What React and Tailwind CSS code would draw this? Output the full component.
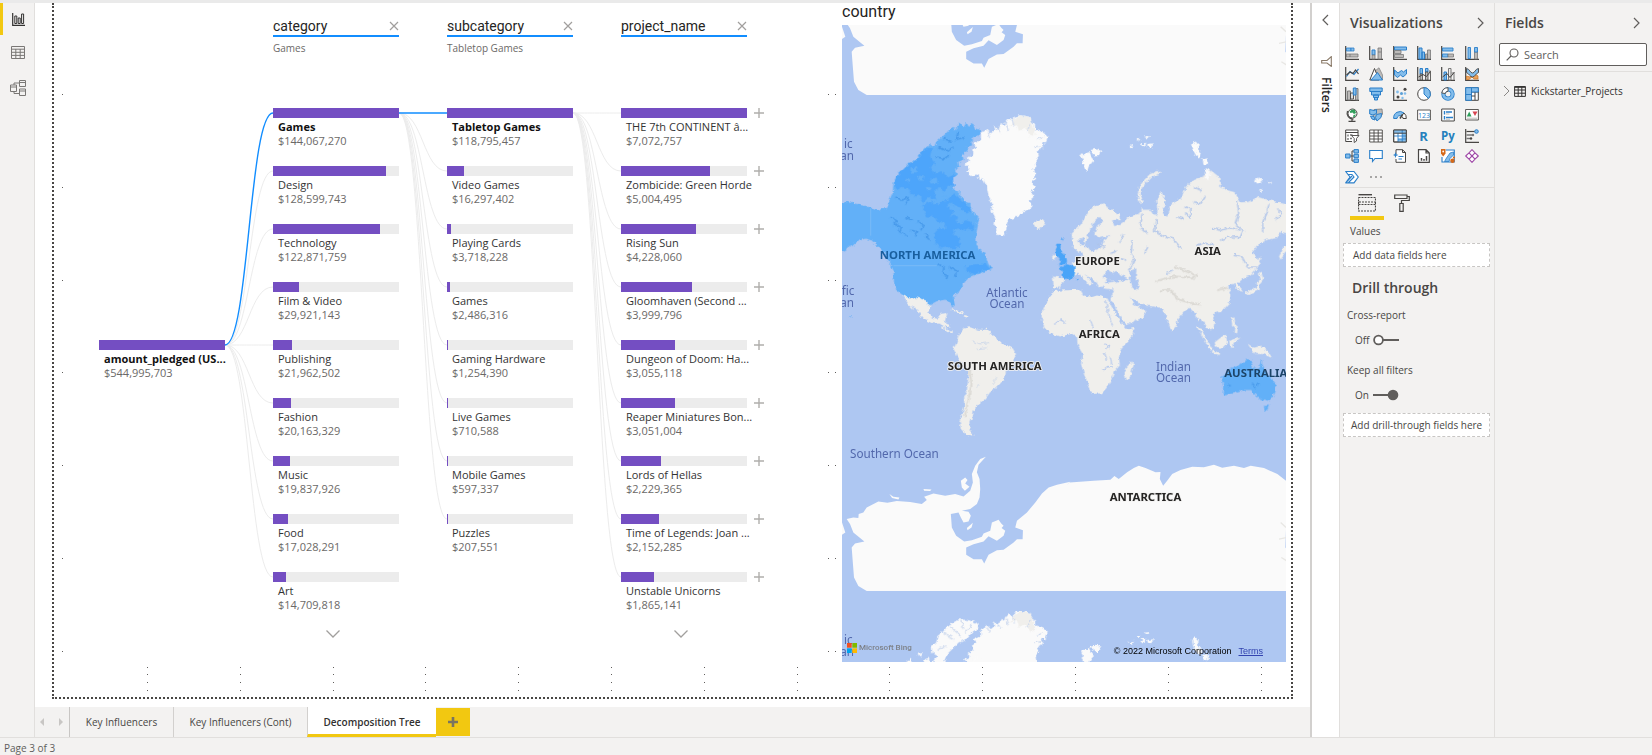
import React from "react";

const D = "#484644";
const B = "#2b7fc9";
const L = "#83bdeb";
const G = "#bdbbb9";

/* ---------- decomposition tree ---------- */

const ROW = 58;

const columns = [
  {
    field: "category",
    picked: "Games",
    more: true,
    nodes: [
      ["Games", "$144,067,270", 100],
      ["Design", "$128,599,743", 89.3],
      ["Technology", "$122,871,759", 85.3],
      ["Film & Video", "$29,921,143", 20.8],
      ["Publishing", "$21,962,502", 15.2],
      ["Fashion", "$20,163,329", 14],
      ["Music", "$19,837,926", 13.8],
      ["Food", "$17,028,291", 11.8],
      ["Art", "$14,709,818", 10.2],
    ],
  },
  {
    field: "subcategory",
    picked: "Tabletop Games",
    nodes: [
      ["Tabletop Games", "$118,795,457", 100],
      ["Video Games", "$16,297,402", 13.7],
      ["Playing Cards", "$3,718,228", 3.1],
      ["Games", "$2,486,316", 2.1],
      ["Gaming Hardware", "$1,254,390", 1.05],
      ["Live Games", "$710,588", 0.6],
      ["Mobile Games", "$597,337", 0.5],
      ["Puzzles", "$207,551", 0.17],
    ],
  },
  {
    field: "project_name",
    more: true,
    expandable: true,
    nodes: [
      ["THE 7th CONTINENT â...", "$7,072,757", 100],
      ["Zombicide: Green Horde", "$5,004,495", 70.8],
      ["Rising Sun", "$4,228,060", 59.8],
      ["Gloomhaven (Second ...", "$3,999,796", 56.6],
      ["Dungeon of Doom: Ha...", "$3,055,118", 43.2],
      ["Reaper Miniatures Bon...", "$3,051,004", 43.1],
      ["Lords of Hellas", "$2,229,365", 31.5],
      ["Time of Legends: Joan ...", "$2,152,285", 30.4],
      ["Unstable Unicorns", "$1,865,141", 26.4],
    ],
  },
];

function Node({ name, value, share, active, expandable }) {
  return (
    <li className="h-[42px] w-[126px]">
      <div className="flex h-[10px] items-center">
        <div className="h-[10px] w-[126px] shrink-0 bg-[#ececec]">
          <div className="h-full bg-[#744ec2]" style={{ width: share + "%" }} />
        </div>
        {expandable && (
          <button type="button" aria-label={"Expand " + name} className="ml-[7px] shrink-0">
            <svg width="10" height="10" viewBox="0 0 10 10" className="block">
              <path d="M5 0V10M0 5H10" stroke="#b0aeac" strokeWidth="1.4" />
            </svg>
          </button>
        )}
      </div>
      <div className="mt-[2px] pl-[5px] text-[11px] leading-[14px] whitespace-nowrap">
        <div className={active ? "font-bold text-[#111111]" : "text-[#333333]"}>{name}</div>
        <div className="text-[#6b6967]">{value}</div>
      </div>
    </li>
  );
}

function Links() {
  const link = (x, y0, y1) =>
    `M${x} ${y0}C${x + 24} ${y0} ${x + 24} ${y1} ${x + 48} ${y1}`;
  const y = (i) => 110 + ROW * i;
  const rest = [];
  for (let i = 1; i < 9; i++) rest.push(link(171, y(4), y(i)));
  for (let i = 1; i < 8; i++) rest.push(link(345, y(0), y(i)));
  for (let i = 0; i < 9; i++) rest.push(link(519, y(0), y(i)));
  return (
    <svg className="pointer-events-none absolute top-0 left-0" width="788" height="640" fill="none">
      <path d={rest.join("")} stroke="#ececec" />
      <path d={link(171, y(4), y(0)) + link(345, y(0), y(0))} stroke="#118dff" strokeWidth="1.4" />
    </svg>
  );
}

function Tree() {
  return (
    <section className="relative flex w-[788px] shrink-0 gap-[48px] pl-[45px]">
      <Links />
      <ul className="relative pt-[337px]">
        <Node name="amount_pledged (US..." value="$544,995,703" share={100} active />
      </ul>
      {columns.map((c) => (
        <div key={c.field} className="relative w-[126px] shrink-0">
          <header className="h-[105px] pt-[13px]">
            <div className="flex h-[21px] items-center justify-between border-b-2 border-[#118dff]">
              <h2 className="font-[Roboto,sans-serif] text-[14px] leading-[18px] text-[#252423]">{c.field}</h2>
              <button type="button" aria-label={"Remove " + c.field}>
                <svg width="10" height="10" viewBox="0 0 10 10" className="block">
                  <path d="M1 1L9 9M9 1L1 9" stroke="#a19f9d" strokeWidth="1.2" />
                </svg>
              </button>
            </div>
            <p className="mt-[3px] text-[10px] leading-[16px] text-[#6b6967]">{c.picked}</p>
          </header>
          <ul className="flex flex-col gap-[16px]">
            {c.nodes.map(([name, value, share], i) => (
              <Node
                key={name}
                name={name}
                value={value}
                share={share}
                active={i === 0 && !c.expandable}
                expandable={c.expandable}
              />
            ))}
          </ul>
          {c.more && (
            <button type="button" aria-label="Show more" className="mt-[16px] flex w-full justify-center pr-[6px]">
              <svg width="14" height="8" viewBox="0 0 14 8" fill="none">
                <path d="M.5 .5L7 7L13.500 .5" stroke="#a19f9d" strokeWidth="1.3" />
              </svg>
            </button>
          )}
        </div>
      ))}
    </section>
  );
}

function Guides() {
  const dots = [];
  for (let k = 0; k < 7; k++) {
    [8, 774, 781].forEach((x) => dots.push([x, 91 + Math.round(92.8 * k)]));
  }
  for (let k = 0; k < 13; k++) {
    [664, 671, 679, 687].forEach((y) => dots.push([93 + Math.round(92.8 * k), y]));
  }
  return (
    <svg className="pointer-events-none absolute inset-0 h-full w-full" fill="#605e5c">
      {dots.map(([x, y]) => (
        <rect key={x + "-" + y} x={x} y={y} width="1" height="1" />
      ))}
    </svg>
  );
}

/* ---------- map ---------- */

const LAND = "#f0efec";
const ICE = "#fafafa";
const SEA = "#aec7f2";

function Antarctica({ dy }) {
  return (
    <g transform={`translate(0 ${dy})`}>
      <path
        fill={ICE}
        d="M50 565L70 560L85 562L86 550L100 545L110 530L145 512L172 516L200 511L240 514L275 520L290 508L282 498L310 488L345 495L375 490L400 497L420 480L428 455L425 430L435 405L450 385L467 378L445 402L440 425L448 445L450 475L448 500L440 520L420 535L395 540L415 543L422 555L415 572L400 575L392 560L385 545L362 550L365 590L378 615L402 632L425 628L455 618L460 608L480 600L485 575L505 567L513 578L520 585L514 592L525 600L520 615L500 630L475 616L460 632L430 640L408 650L408 672L430 685L455 685L462 698L475 672L500 658L520 657L550 635L560 625L577 625L578 598L555 590L560 570L590 545L615 515L635 488L655 470L680 462L720 453L705 466L718 455L790 450L840 447L852 436L865 445L890 425L910 412L925 405L945 412L975 425L990 424L988 445L998 465L1010 450L1025 430L1050 418L1085 408L1120 410L1150 402L1175 411L1210 405L1240 412L1260 405L1300 412L1340 430L1372 455V780H110L85 765L72 740L68 690L65 650L75 638L103 632L70 605L60 580ZM36 575L46 605L36 612Z"
      />
      <path fill={ICE} d="M178 490L190 498L208 500L205 506L186 502ZM280 475L304 476L300 481L282 480ZM392 450L405 440L412 448L405 458L418 468L404 480L395 470Z" />
      <path fill={SEA} d="M368 556L384 550L388 566L372 572Z" />
      <path fill={ICE} d="M410 592L428 576L424 590L412 598Z" />
      <path fill={SEA} d="M1366 595L1372 590V660L1364 650Z" />
      <path d="M1345 625L1368 620M1350 575L1366 590M1352 680L1368 690" stroke="#e8e7e4" strokeWidth="4" fill="none" />
    </g>
  );
}

function ArcticIslands() {
  return (
    <g>
      <path
        fill={ICE}
        d="M452 400L470 388L482 400L495 388L490 378L505 390L512 368L520 374L535 355L550 362L552 350L570 345L600 350L603 366L614 374L615 388L640 398L652 410L645 430L634 426L638 442L622 450L626 466L616 480L618 500L606 505L617 520L612 535L602 545L614 560L604 575L610 590L598 600L606 620L580 635L560 650L540 656L530 668L528 690L520 705L500 703L497 680L490 670L494 650L484 630L486 610L475 590L470 560L460 540L446 534L440 522L425 528L408 515L418 505L402 490L420 482L412 474L430 462L424 450L438 440L430 430L452 420Z"
      />
      <path fill={LAND} d="M555 355L572 346L600 352L608 375L616 400L600 410L588 385L566 392L560 372L540 380Z" />
      <path d="M500 380L512 398M525 366L535 390M545 356L552 380M600 372L590 394M640 410L620 418M634 436L612 440M470 392L478 410" stroke="#c9d6ee" strokeWidth="3" fill="none" />
      <g transform="translate(690 0)" fill={ICE}>
        <path d="M58 460L75 462L85 455L92 470L100 480L92 490L84 500L80 515L74 500L66 490L70 478ZM90 450L105 446L123 452L115 465L100 466Z" />
        <path d="M205 438L220 434L214 444ZM240 430L258 428L250 440ZM260 432L280 430L272 442L262 440ZM250 410L270 408L260 415ZM228 418L240 416L234 424Z" />
        <path d="M395 432L405 424L414 434L412 448L422 460L420 474L408 468L400 455L396 445ZM425 478L440 474L444 488L430 494Z" />
      </g>
    </g>
  );
}

function WorldMap() {
  return (
    <svg
      viewBox="36 75 1335 1908"
      preserveAspectRatio="xMinYMin slice"
      className="absolute inset-0 h-full w-full font-['Noto_Sans',sans-serif]"
      role="img"
      aria-label="country"
    >
      <defs>
        <filter id="coast" x="-5%" y="-5%" width="110%" height="110%">
          <feTurbulence type="fractalNoise" baseFrequency="0.09" numOctaves="2" seed="4" result="n" />
          <feDisplacementMap in="SourceGraphic" in2="n" scale="14" xChannelSelector="R" yChannelSelector="G" />
        </filter>
      </defs>
      <rect x="0" y="0" width="3000" height="3000" fill={SEA} />

      <Antarctica dy={-495} />
      <Antarctica dy={990} />

      <g filter="url(#coast)">
        <ArcticIslands />
        <g transform="translate(0 1485)">
          <ArcticIslands />
        </g>
        <g transform="translate(0 990)">
          <path fill={ICE} d="M305 945L318 935L322 915L340 900L352 885L385 865L420 868L445 880L442 900L425 905L412 922L385 935L370 950L355 965L345 985L340 1000L300 1000L322 975L306 965ZM236 985L246 978L244 995L230 998ZM262 970L278 965L272 978ZM284 985L296 980L300 1000H280ZM430 985L445 975L455 1000H425Z" />
          <path d="M340 905L372 925M360 885L392 915M395 870L400 895M322 955L352 945M425 880L405 905" stroke="#cdd9ee" strokeWidth="4" fill="none" />
        </g>

        {/* Iceland, Mexico and the Caribbean */}
        <path fill={LAND} d="M612 672L620 660L636 656L646 666L640 676L626 686L616 682Z" />
        <path fill={LAND} d="M214 885L262 888L290 900L300 915L295 935L306 952L322 955L332 940L352 938L346 955L344 966L358 970L360 982L344 978L328 970L306 968L280 956L268 940L258 925L246 912L252 930L240 918L228 900Z" />
        <path d="M366 928L385 934L400 940M402 946L414 949M338 978L352 992L368 996" stroke={LAND} strokeWidth="5" fill="none" />

        {/* South America */}
        <path fill={LAND} d="M385 1005L400 985L420 980L440 988L470 988L490 1005L512 1028L530 1035L548 1044L557 1060L545 1085L528 1110L522 1135L500 1160L480 1175L465 1195L445 1210L432 1225L428 1245L418 1262L418 1285L430 1305L408 1302L392 1285L388 1260L402 1220L402 1190L410 1170L415 1130L415 1105L395 1085L380 1065L370 1045L380 1025Z" />
        <path d="M418 1110L424 1150L414 1200L404 1250" stroke="#dddbd6" strokeWidth="6" fill="none" />
        <path d="M425 1020L450 1030L480 1026M440 1045L470 1042M486 1150L500 1130M440 1160L446 1150" stroke="#d3dcea" strokeWidth="3" fill="none" />

        {/* Africa */}
        <path fill={LAND} d="M690 870L750 868L760 885L785 890L800 885L830 892L842 915L858 945L875 970L890 988L912 982L905 1005L885 1030L870 1050L866 1070L868 1095L850 1115L843 1140L830 1160L815 1178L785 1180L778 1160L765 1130L752 1090L757 1060L742 1035L740 1010L725 1000L690 1008L660 1000L645 985L636 965L634 940L645 915L655 895L672 872Z" />
        <path fill={LAND} d="M905 1082L910 1092L902 1120L896 1135L886 1138L880 1120L886 1102Z" />
        <path fill="none" stroke="#b9cbed" strokeWidth="4" d="M822 1030L836 1036L828 1046M822 1055L828 1078M840 1070L844 1090M816 1110L832 1098L846 1100M672 972L690 958L706 966M780 960L790 985M826 900L834 940L846 975" />

        {/* Europe and Asia */}
        <g transform="translate(690 0)">
          <path fill={LAND} d="M34 700L50 684L62 672L75 650L92 622L110 614L125 610L150 626L178 645L178 658L155 660L162 678L178 672L190 664L204 650L235 640L245 628L270 628L285 648L294 630L290 600L302 572L314 600L308 640L320 650L326 620L345 600L362 598L375 560L400 540L430 528L436 505L450 510L476 530L480 560L500 570L522 576L540 606L565 605L595 590L625 600L650 606L684 614V700L660 695L650 712L620 718L590 735L575 755L594 780L588 805L570 825L550 832L530 850L545 868L536 875L520 850L502 856L512 884L505 910L485 932L455 942L462 965L458 984L444 988L432 968L422 955L412 962L406 940L385 922L370 935L352 958L346 980L335 994L322 965L312 932L290 920L262 916L240 912L224 900L208 888L220 910L234 918L258 932L245 952L196 974L182 950L165 920L150 896L162 868L130 864L124 850L160 844L140 836L132 850L116 862L100 836L84 830L72 820L90 842L96 850L86 854L62 826L52 816L40 830L28 828L38 790L52 772L66 765L60 748L78 762L50 752L38 738Z" />
          <path fill={LAND} d="M-22 828L8 833L12 840L0 850L-4 862L-20 864Z" />
          <path fill={LAND} d="M-26 772L-14 762L-10 768L-16 776Z" />
          <path fill={SEA} d="M72 742L84 700L98 668L118 650L130 660L108 682L102 700L116 714L152 704L130 718L124 742L92 754L82 740ZM50 722L70 712L76 735L62 735ZM126 830L142 808L156 818L168 812L176 820L206 836L170 846L146 838ZM206 812L228 804L226 830L238 858L222 870L210 846Z" />
          <path fill={LAND} d="M142 850L180 842L190 862L160 868Z" />
          <path d="M296 516L270 526L252 545L240 562L236 582L242 606" stroke={LAND} strokeWidth="9" fill="none" />
          <path fill={ICE} d="M580 540L596 532L606 544L590 550ZM620 542L632 544L626 550ZM595 568L604 566L602 576ZM436 505L450 512L446 540L432 536Z" />
          <path fill={LAND} d="M668 736L684 730V748L672 760L660 778L655 768L664 752Z" />
          <path d="M598 815L604 835L592 850L594 862L574 872L556 880M588 800L600 770M514 950L518 972L528 980L526 998M412 978L440 1025L452 1048M455 1054L478 1060" stroke={LAND} strokeWidth="7" fill="none" />
          <path fill={LAND} d="M462 1026L480 1012L496 1000L500 1030L486 1045L466 1038ZM506 1020L540 1012L518 1028L520 1044L508 1036ZM560 1030L580 1042L602 1036L622 1052L634 1072L608 1060L584 1060Z" />
          <path
            fill="none"
            stroke="#afc4ea"
            strokeWidth="4"
            d="M290 656L282 690L305 706L335 712L362 745M530 600L534 640L524 670L548 690L540 708L500 712L478 720M456 684L482 690L510 682L540 690M522 765L545 770L560 800L590 800M625 610L618 640L606 665L606 695M650 625L664 640L645 660M372 620L392 625L388 650L374 640M398 604L420 610L434 590M215 720L212 760L222 780L204 810M245 640L240 680L262 700M262 740L250 760M400 560L424 572M408 735L430 728L460 734M190 700L178 724M316 820L336 812M350 650L368 656M180 775L200 780M110 730L134 742M150 760L168 752"
          />
          <path d="M285 842L340 828L405 832M345 800L410 826M298 870L330 868L352 896L384 906L420 912M470 870L500 862" stroke="#dcdad5" strokeWidth="6" fill="none" />
        </g>

        {/* highlighted countries */}
        <path fill="#62b0f8" d="M20 612L58 603L75 610L100 612L120 622L150 628L172 622L178 600L188 575L190 550L200 525L218 510L235 490L255 480L275 455L298 432L312 440L318 425L345 402L365 380L376 388L390 370L398 380L408 366L416 380L428 368L434 384L452 392L440 408L422 422L426 436L410 440L412 456L396 462L400 478L384 485L388 500L374 508L380 522L368 540L374 556L368 566L388 576L386 586L404 592L402 604L420 608L424 630L447 655L440 690L435 720L445 745L465 760L474 790L485 806L470 810L455 818L440 822L425 828L410 838L395 855L388 872L368 888L374 915L366 920L358 902L345 898L320 902L298 914L288 900L262 892L230 890L215 882L200 870L192 850L190 810L175 780L160 755L145 740L125 720L105 715L80 724L70 738L60 732L44 752L20 762Z" />
        <path fill="#4ea5fb" d="M192 545L205 520L235 495L258 480L285 448L305 445L300 470L315 490L298 500L312 520L336 512L350 530L372 520L372 560L352 556L344 576L330 560L312 572L318 600L296 590L280 606L266 584L244 586L236 566L216 560L200 570Z" />
        <path fill="#4ea5fb" d="M276 616L300 604L322 612L345 598L362 606L350 620L372 634L356 652L370 642L384 650L376 668L392 672L404 660L420 664L432 676L428 690L412 684L400 692L384 684L368 690L378 706L390 716L388 738L366 748L350 738L330 742L314 724L312 700L326 684L346 684L344 668L322 664L310 646L290 650ZM402 800L430 792L466 790L480 806L450 812L424 822ZM350 600L372 580L400 605L424 630L410 640L384 620Z" />
        <path fill="#62b0f8" d="M240 505L262 500L258 516L244 518ZM262 528L284 524L280 542L264 540ZM300 535L320 532L322 548L304 550ZM225 540L240 536L238 550ZM334 585L352 590L342 602ZM286 560L304 562L296 574Z" />
        <path fill="none" stroke="#4598ea" strokeWidth="4" d="M182 650L200 660L192 672L214 680L208 694L232 706M226 652L248 660M262 664L280 672L272 690M240 690L262 694L256 708M196 590L216 600L234 592L226 612M322 790L342 800L338 820L352 826L348 838M356 800L380 812L374 830M324 440L350 452L370 440M340 415L364 424M386 392L378 418L402 412M318 470L342 476L360 462M284 700L300 718" />
        <path fill="#4aa4f8" d="M682 730L692 732L690 745L697 758L708 772L710 786L700 792L686 796L692 780L680 766L676 752ZM684 800L698 798L708 788L722 792L736 800L734 815L730 832L712 836L698 832L696 815Z" />
        <g transform="translate(690 990)">
          <path fill="#62b0f8" d="M482 140L500 128L512 112L530 108L540 98L550 100L556 88L576 92L570 106L590 116L598 104L601 84L608 110L616 126L632 142L645 160L644 184L634 204L618 212L600 208L588 196L580 190L572 178L550 178L520 188L494 194L486 190L488 168ZM609 226L625 224L620 238L612 238Z" />
          <path fill="none" stroke="#4598ea" strokeWidth="4" d="M574 160L584 172M592 156L590 166M504 164L510 166" />
        </g>
        <path d="M58 946L66 948M696 712L698 720M738 836L744 838" stroke="#4aa4f8" strokeWidth="4" />
      </g>
      <path d="M122 624V706M190 796H320" stroke="#86bff5" strokeWidth="2" fill="none" />

      <g fontSize="34" fontWeight="700" fill="#252423" stroke="#f3f2f1" strokeWidth="5" paintOrder="stroke" strokeLinejoin="round">
        <text x="734" y="795">EUROPE</text>
        <text x="1092" y="765">ASIA</text>
        <text x="745" y="1013">AFRICA</text>
        <text x="353" y="1107">SOUTH AMERICA</text>
        <text x="838" y="1501">ANTARCTICA</text>
      </g>
      <g fontSize="34" fontWeight="700" fill="#185e9e">
        <text x="149" y="777">NORTH AMERICA</text>
        <text x="1370" y="1129" textAnchor="end" fill="#1c4468">AUSTRALIA</text>
      </g>
      <g fontSize="35" fill="#5268ac" textAnchor="middle">
        <text x="530" y="889">Atlantic</text>
        <text x="530" y="924">Ocean</text>
        <text x="1029" y="1110">Indian</text>
        <text x="1029" y="1145">Ocean</text>
        <text x="193" y="1372">Southern Ocean</text>
      </g>
      <g fontSize="35" fill="#5268ac" textAnchor="end">
        <text x="68" y="444">ic</text>
        <text x="72" y="479">an</text>
        <text x="73" y="884">fic</text>
        <text x="72" y="919">an</text>
        <text x="68" y="1929">ic</text>
        <text x="72" y="1964">an</text>
      </g>
    </svg>
  );
}

function MapVisual() {
  return (
    <section className="relative mr-[5px] mb-[35px] flex min-w-0 flex-1 flex-col">
      <h2 className="h-[22px] font-[Roboto,sans-serif] text-[16px] leading-[18px] text-[#252423]">country</h2>
      <div className="relative flex flex-1 items-end justify-between overflow-hidden">
        <WorldMap />
        <div className="relative mb-[8px] ml-[5px] flex items-center gap-[2px]">
          <svg width="10" height="10" viewBox="0 0 10 10">
            <path fill="#f25022" d="M0 0H4.700V4.700H0Z" />
            <path fill="#7fba00" d="M5.300 0H10V4.700H5.300Z" />
            <path fill="#00a4ef" d="M0 5.300H4.700V10H0Z" />
            <path fill="#ffb900" d="M5.300 5.300H10V10H5.300Z" />
          </svg>
          <span className="font-[Roboto,sans-serif] text-[8px] leading-[12px] font-medium text-[#7d8188]">Microsoft Bing</span>
        </div>
        <div className="relative mr-[23px] mb-[5px] flex gap-[7px] font-['Liberation_Sans',sans-serif] text-[9px] leading-[12px] text-black">
          <span>© 2022 Microsoft Corporation</span>
          <a href="#terms" className="text-[#3344b0] underline">Terms</a>
        </div>
      </div>
    </section>
  );
}

/* ---------- visualization gallery ---------- */

const Axes = () => <path d="M.7 0V13.300H14" stroke={D} strokeWidth="1.200" fill="none" />;

const gallery = [
  ["Stacked bar chart", <><Axes /><path fill={L} stroke={B} strokeWidth=".8" d="M1.500 2H6V5H1.500Z" /><path fill={L} stroke={B} strokeWidth=".8" d="M6 2H9V5H6Z" /><path fill={G} stroke="#777" strokeWidth=".8" d="M1.500 8H13V11H1.500ZM5 8V11" /></>],
  ["Stacked column chart", <><Axes /><path fill={L} stroke={B} d="M3 4H6V9H3Z" /><path fill={G} stroke="#777" strokeWidth=".8" d="M3 9H6V13H3ZM9 2H12.500V13H9ZM9 6H12.500" /></>],
  ["Clustered bar chart", <><Axes /><path fill={L} stroke={B} d="M1.500 1H13.500V4H1.500Z" /><path fill={G} stroke="#777" strokeWidth=".8" d="M1.500 4.500H8V7.500H1.500ZM1.500 8.500H10.500V11.500H1.500Z" /></>],
  ["Clustered column chart", <><Axes /><path fill={L} stroke={B} d="M2 2H5V13H2ZM5 6H7.500V13H5Z" /><path fill={G} stroke="#777" strokeWidth=".8" d="M8.500 8H10.500V13H8.500ZM10.500 4H13.500V13H10.500Z" /></>],
  ["100% stacked bar chart", <><Axes /><path fill={L} stroke={B} strokeWidth=".9" d="M1.500 2H12V5H1.500ZM1.500 8H7V11H1.500Z" /><path fill={G} stroke="#777" strokeWidth=".8" d="M7 8H12.500V11H7Z" /></>],
  ["100% stacked column chart", <><Axes /><path fill={L} stroke={B} strokeWidth=".9" d="M3 1.500H5.500V12.500H3Z" /><path fill={G} stroke="#777" strokeWidth=".8" d="M9.500 6H12.500V13H9.500Z" /><path fill={L} stroke={B} strokeWidth=".9" d="M9.500 1.500H12.500V6H9.500Z" /></>],

  ["Line chart", <><Axes /><path fill="none" stroke={B} strokeWidth="1.200" d="M1.500 9.500L5 4.500L9 7.500L13.500 2" /><path fill="none" stroke={D} strokeWidth="1.200" d="M1.500 8L5 5L8 6.500L10.500 3L13.500 7" /></>],
  ["Area chart", <><path fill={G} stroke="#888" strokeWidth=".8" d="M6 4L10 .8L13.500 8V13Z" /><path fill="#fff" stroke={D} d="M.8 13L5.500 1.500L10 13Z" /><path fill={L} stroke={B} d="M2 13L8.500 5.500L13.500 13Z" /></>],
  ["Stacked area chart", <><Axes /><path fill={L} stroke={B} d="M1.500 3L5 6L8.500 3.500L10.500 5L13.500 2.500V7L10 10L7.500 8L4.500 10.500L1.500 8Z" /></>],
  ["Line and stacked column chart", <><Axes /><path fill={L} stroke={B} d="M3 1.500H5.500V7H3ZM8.500 1.500H11V5H8.500Z" /><path fill={G} stroke={D} strokeWidth=".8" d="M3 7H5.500V13H3ZM8.500 5H11V13H8.500ZM12 4H13.500V13" /><path fill="none" stroke={D} d="M1.500 10L6 7.500L9.500 9.500L13 5" /></>],
  ["Line and clustered column chart", <><Axes /><path fill={L} stroke={B} d="M3 5H5.500V13H3Z" /><path fill="#eee" stroke="#777" d="M7.500 1.500H10V13H7.500ZM10.500 6H13V13" /><path fill="none" stroke={D} d="M1.500 10L6 6.500L9 10.500L13.500 5" /></>],
  ["Ribbon chart", <><Axes /><path fill="#e8a15c" stroke="#d0741c" strokeWidth=".7" d="M1.500 9L5 10L9 6L13 9V12H9L7 10L4 12.500H1.500Z" /><path fill={L} stroke={D} strokeWidth=".9" d="M1.500 1.500C5 2 5 6 7.500 6S10 2 13.500 1.500V5.500C11 6 10 10 7.500 10S4 6.500 1.500 5.500Z" /></>],

  ["Waterfall chart", <><Axes /><path fill={G} stroke="#777" strokeWidth=".9" d="M2.500 4H5.500V13H2.500ZM10.500 1.500H13V13H10.500Z" /><path fill="#ddd" stroke={D} strokeWidth=".9" d="M5.500 6H8.500V12H5.500Z" /><path fill={L} stroke={B} d="M8.300 1H11V8H8.300Z" /></>],
  ["Funnel chart", <path fill={L} stroke={B} d="M.8 1H13.200V4.500H.8ZM2.500 4.500H11.500V8H2.500ZM4.500 8H9.500V10.500H4.500ZM5.500 10.500H8.500V13H5.500Z" />],
  ["Scatter chart", <><Axes /><circle cx="4.500" cy="5" r="1.400" fill={L} /><circle cx="12" cy="2.200" r="1.500" fill={D} /><circle cx="8.500" cy="6.500" r="1.500" fill="#5b9fd6" /><circle cx="5" cy="10" r="1.500" fill={D} /><circle cx="12" cy="6.500" r="1.300" fill={L} /><circle cx="9.500" cy="11" r="1.200" fill={L} /></>],
  ["Pie chart", <><circle cx="7" cy="7" r="6.300" fill="#fff" stroke={D} /><path fill={L} stroke={B} d="M7 7V.7A6.300 6.300 0 0 1 11.500 11.500Z" /></>],
  ["Donut chart", <><circle cx="7" cy="7" r="4.600" fill="none" stroke={B} strokeWidth="4.200" /><circle cx="7" cy="7" r="4.600" fill="none" stroke={L} strokeWidth="2.600" /><path fill="#fff" stroke={D} strokeWidth=".9" d="M7 .7A6.300 6.300 0 0 0 .8 6L4.300 6.500A2.600 2.600 0 0 1 7 4.300Z" /></>],
  ["Treemap", <><path fill="#fff" stroke={D} d="M.7 .7H13.300V13.300H.7Z" /><path fill={L} stroke={B} d="M.7 .7H6.500V13.300H.7ZM.7 7.500H6.500" /><path fill="none" stroke={D} d="M6.500 5H13.300M10 5V13.300M6.500 9H10" /><path fill={L} stroke={B} d="M6.500 .7H13.300V5H6.500Z" /></>],

  ["Map", <><circle cx="7.500" cy="5.500" r="4.500" fill="#fff" stroke={D} /><path fill="#2f9e5a" d="M7 1.500L10 2L11 5L9 6L7.500 4.500L5.500 5L4.500 3.500ZM8.500 7L11 6.500L9.500 9L8 9.500Z" /><path fill="none" stroke={D} strokeWidth="1.200" d="M2.500 3C1 7 4 11.500 8.500 11M7 11V13.300M3.500 13.300H10.500" /></>],
  ["Filled map", <><path fill={G} stroke="#777" strokeWidth=".8" d="M5 1.500L13 1L13.500 6L11 10L8 12L4 10Z" /><path fill={L} stroke={B} d="M.7 1.500L5 2.500L7.500 1.500V5.500L4 7L.7 6ZM7.500 6.500L12.500 5.500L12 9.500L8 13L6.500 9.500ZM1.500 8L5 8.500L6 12L3 11Z" /></>],
  ["Gauge", <><path fill={L} stroke={B} d="M.7 10.500A6.300 6.300 0 0 1 11 5L8.500 8A3 3 0 0 0 4 10.500Z" /><path fill="#fff" stroke={D} d="M11 5A6.300 6.300 0 0 1 13.300 10.500H10A3 3 0 0 0 8.500 8Z" /><path stroke={D} strokeWidth="1.500" d="M7 10.500L9.500 6.500" /></>],
  ["Card", <><path fill="#fff" stroke={D} strokeWidth=".9" d="M.6 2H13.400V12H.6Z" /><text x="7" y="9.700" textAnchor="middle" fontSize="7" fill={B}>123</text></>],
  ["Multi-row card", <><path fill="#fff" stroke={D} d="M.7 1H13.300V13H.7Z" /><path stroke={B} strokeWidth="1.400" d="M3.500 3V6.500M3.500 8V11.500M5 4H11M5 9.500H12" /><path stroke={G} d="M5 6H8.500M5 11.200H9" /></>],
  ["KPI", <><path fill="#fff" stroke={D} strokeWidth=".9" d="M.6 1.500H13.400V12H.6Z" /><path fill="#2f9e5a" d="M1.800 8.500L4.200 3.500L6.500 8.500Z" /><path fill="#d64550" d="M7.500 3.500H12.500L10 8Z" /><path stroke={G} d="M2 10.200H12" /></>],

  ["Slicer", <><path fill="#fff" stroke={D} d="M13 6V1H.7V12.500H7M.7 3.500H13" /><path stroke="#777" strokeWidth="1.400" d="M3 5.500V7.500M3 9V11M5 6H7.500M5 9.500H7" /><path fill="#fff" stroke={D} strokeWidth=".9" d="M6.500 6.500H14L11.500 9.500V12L9.200 13.500V9.500Z" /></>],
  ["Table", <path fill="#fff" stroke={D} strokeWidth=".9" d="M.7 1H13.300V13H.7ZM.7 4H13.300M.7 7H13.300M.7 10H13.300M5 1V13M9.200 1V13" />],
  ["Matrix", <><path fill="#fff" stroke={D} strokeWidth=".9" d="M.7 1H13.300V13H.7Z" /><path fill={L} d="M.7 1H13.300V4.500H.7ZM9.200 4H13.300V13H9.200ZM5 10H10V13H5Z" /><path fill="none" stroke={B} strokeWidth=".9" d="M5 4V13M9.200 1V13M.7 7H13.300M5 10H13.300" /><path fill="none" stroke={D} d="M.7 1H13.300V13H.7ZM.7 4.200H13.300" /></>],
  ["R script visual", <text x="6.500" y="11.800" textAnchor="middle" fontSize="13" fontWeight="700" fill="#2580bd">R</text>],
  ["Python visual", <text x="7" y="11" textAnchor="middle" fontSize="11.500" fontWeight="700" fill="#2580bd">Py</text>],
  ["Key influencers", <><Axes /><path stroke="#777" strokeWidth="1.300" d="M1.500 6H7M1.500 9.500H5" /><path stroke={D} strokeWidth="1.200" d="M1.500 2.500H10" /><circle cx="11.500" cy="2.500" r="1.800" fill={L} stroke={B} /><circle cx="8" cy="6" r="1.200" fill="#777" /><circle cx="6" cy="9.500" r="1.200" fill={D} /></>],

  ["Decomposition tree", <><path stroke={D} fill="none" d="M5 7H9M7 2V12M7 2H9M7 12H9" /><path fill={L} stroke={B} d="M.6 5H5V9H.6ZM9 .6H13.400V4H9ZM9 5.300H13.400V8.700H9ZM9 10H13.400V13.400H9Z" /></>],
  ["Q&A", <path fill="#fff" stroke={B} strokeWidth="1.100" d="M.7 1.500H13.300V9.500H6L3.500 12.500V9.500H.7Z" />],
  ["Smart narrative", <><path fill="#fff" stroke={D} d="M3 5V.7H9.500L12.500 3.500V13.300H3V10M9.500 .7V3.500H12.500" /><path stroke={B} strokeWidth="1.200" d="M5.500 7.500H10.500M5.500 10H9" /><path fill={B} d="M2.500 3L3.300 5.200L5.500 6L3.300 6.800L2.500 9L1.700 6.800L0 6L1.700 5.200Z" /></>],
  ["Paginated report", <><path fill="#fff" stroke={D} strokeWidth="1.200" d="M1.500 .7H9L12.300 4V13.300H1.500ZM9 .7V4H12.300" /><path stroke={D} strokeWidth="1.500" d="M4.500 9V11.800M7 10V11.800M9.500 7V11.800" /></>],
  ["ArcGIS map", <><path fill="#fff" stroke={B} strokeWidth="1.100" d="M5 1H13.300V13H1V8" /><path fill={L} stroke={B} strokeWidth=".8" d="M5.500 9L9 4L12.500 3V6L9 9.500L8 12.500H3.500Z" /><path fill="#d4691a" d="M0 0H4.500V4.500L2.200 7.500L0 4.500Z" /><circle cx="2.200" cy="2.500" r=".9" fill="#fff" /><circle cx="11.500" cy="11.800" r="2.200" fill="#d4691a" /><circle cx="13" cy="8.500" r="1.100" fill="#d4691a" /></>],
  ["Power Apps", <path fill="#fff" stroke="#a04aa8" strokeWidth="1.100" strokeLinejoin="round" d="M7 .7L10 3.900L7 7L4 3.900ZM10 3.900L13.300 7L10 10.200L7 7ZM4 3.900L.7 7L4 10.200L7 7ZM7 7L10 10.200L7 13.300L4 10.200Z" />],

  ["Power Automate", <path fill="#fff" stroke={B} strokeWidth="1.200" strokeLinejoin="round" d="M.7 1.500H9L13.300 7L9 12.800H.7L5 7ZM3 4.500H7L9 7L3.500 12.500M.7 12.800L7 6" />],
  ["More options", <><circle cx="2" cy="7" r=".8" fill={D} /><circle cx="7" cy="7" r=".8" fill={D} /><circle cx="12" cy="7" r=".8" fill={D} /></>],
];

function Chevron({ left }) {
  return (
    <svg width="7" height="12" viewBox="0 0 7 12" fill="none" className="block">
      <path d={left ? "M6 1L1 6L6 11" : "M1 1L6 6L1 11"} stroke="#605e5c" strokeWidth="1.200" />
    </svg>
  );
}

function Toggle({ label, on }) {
  return (
    <div className="pl-[6px]">
      <div className="leading-[16px]">{label}</div>
      <label className="mt-[9px] ml-[8px] flex h-[16px] items-center">
        <span className="w-[18px] leading-[16px]">{on ? "On" : "Off"}</span>
        <input type="checkbox" defaultChecked={on} aria-label={label} className="sr-only" />
        <svg width="26" height="12" viewBox="0 0 26 12">
          {on ? (
            <>
              <path d="M0 6H16" stroke="#605e5c" strokeWidth="2" />
              <circle cx="20" cy="6" r="5.300" fill="#605e5c" />
            </>
          ) : (
            <>
              <path d="M10 6H26" stroke="#605e5c" strokeWidth="2" />
              <circle cx="5.500" cy="6" r="4.400" fill="#fff" stroke="#605e5c" strokeWidth="1.800" />
            </>
          )}
        </svg>
      </label>
    </div>
  );
}

function Visualizations() {
  return (
    <aside className="w-[155px] shrink-0 border-l border-[#e1dfdd] text-[#484644]">
      <header className="flex h-[40px] items-center justify-between pr-[10px] pl-[10px]">
        <h2 className="text-[14px] leading-[20px] font-semibold">Visualizations</h2>
        <button type="button" aria-label="Collapse visualizations"><Chevron /></button>
      </header>
      <div className="grid h-[144px] grid-cols-[repeat(6,24px)] grid-rows-7 items-center pl-[5px]">
        {gallery.map(([title, art]) => (
          <button key={title} type="button" title={title} aria-label={title} className="w-[14px]">
            <svg width="14" height="14" viewBox="0 0 14 14" className="block overflow-visible" fill="none">
              {art}
            </svg>
          </button>
        ))}
      </div>
      <div className="border-t border-[#e1dfdd] pr-[4px] pl-[3px] text-[10px]">
        <div className="flex gap-[10px] pt-[6px] pl-[7px]">
          <button type="button" aria-label="Fields" className="flex h-[26px] w-[34px] justify-center border-b-4 border-[#f2c811]">
            <svg width="18" height="18" viewBox="0 0 18 18" fill="none">
              <path d="M.5 .7H14" stroke={D} strokeWidth="1.400" />
              <path d="M.5 3.500H17.500V8H.5V3.500M.5 10.500H17.500V17H.5V10.500M.5 8V11M17.500 8V11" stroke={D} strokeWidth="1.200" strokeDasharray="2 1" />
            </svg>
          </button>
          <button type="button" aria-label="Format" className="h-[18px]">
            <svg width="16" height="18" viewBox="0 0 16 18" fill="none">
              <path d="M.7 1H13V4.500H.7ZM13 2.500H15.300V6.500H7.500V9M5.800 9.500H9.200V17.300H5.800Z" stroke={D} strokeWidth="1.200" />
            </svg>
          </button>
        </div>
        <div className="mt-[3px] pl-[7px] leading-[16px]">Values</div>
        <div className="mt-[4px] flex h-[24px] items-center border border-dashed border-[#c8c6c4] bg-white pl-[9px]">
          Add data fields here
        </div>
        <h3 className="mt-[11px] mb-[9px] pl-[9px] text-[14px] leading-[20px] font-semibold">Drill through</h3>
        <div className="-ml-[2px] flex flex-col gap-[14px]">
          <Toggle label="Cross-report" />
          <Toggle label="Keep all filters" on />
        </div>
        <div className="mt-[10px] flex h-[24px] items-center border border-dashed border-[#c8c6c4] bg-white pl-[7px] whitespace-nowrap">
          Add drill-through fields here
        </div>
      </div>
    </aside>
  );
}

function Fields() {
  return (
    <aside className="w-[158px] shrink-0 border-l border-[#e1dfdd] text-[#484644]">
      <header className="flex h-[40px] items-center justify-between pr-[12px] pl-[10px]">
        <h2 className="text-[14px] leading-[20px] font-semibold">Fields</h2>
        <button type="button" aria-label="Collapse fields"><Chevron /></button>
      </header>
      <div className="border-b border-[#e1dfdd] pr-[5px] pb-[5px] pl-[4px]">
        <label className="flex h-[23px] items-center gap-[5px] rounded-[2px] border border-[#605e5c] bg-white pl-[6px]">
          <svg width="13" height="13" viewBox="0 0 13 13" fill="none" className="shrink-0">
            <circle cx="8" cy="5" r="4" stroke="#605e5c" strokeWidth="1.100" />
            <path d="M5 8L.7 12.300" stroke="#605e5c" strokeWidth="1.200" />
          </svg>
          <input
            type="search"
            aria-label="Search"
            placeholder="Search"
            className="w-full min-w-0 bg-transparent text-[11px] leading-[16px] outline-none placeholder:text-[#605e5c]"
          />
        </label>
      </div>
      <button type="button" className="mt-[10px] flex h-[18px] items-center pl-[8px] text-[10px] text-[#323130]">
        <svg width="7" height="12" viewBox="0 0 7 12" fill="none">
          <path d="M1 1L6 6L1 11" stroke="#8a8886" />
        </svg>
        <svg width="12" height="11" viewBox="0 0 12 11" fill="none" className="mr-[5px] ml-[4px]">
          <path d="M.6 .6H11.400V10.400H.6ZM.6 4H11.400M.6 7.200H11.400M4.200 1V10.400M7.800 1V10.400" stroke="#323130" />
          <path d="M.6 1H11.400" stroke="#323130" strokeWidth="1.600" />
        </svg>
        Kickstarter_Projects
      </button>
    </aside>
  );
}

function FiltersStrip() {
  return (
    <aside className="flex w-[29px] shrink-0 flex-col items-center border-l-2 border-[#d2d0ce] bg-white pt-[11px]">
      <button type="button" aria-label="Expand filters"><Chevron left /></button>
      <svg width="11" height="11" viewBox="0 0 11 11" fill="none" className="mt-[30px] ml-[2px]">
        <path d="M10.300 .6V10.400L6 7H.7V4.500H6Z" stroke="#8a7a68" strokeWidth="1.100" />
      </svg>
      <h2 className="mt-[10px] text-[12px] leading-[16px] font-semibold text-[#252423] [writing-mode:vertical-rl]">Filters</h2>
    </aside>
  );
}

/* ---------- shell ---------- */

function NavRail() {
  return (
    <nav className="flex w-[35px] shrink-0 flex-col border-r border-[#e1dfdd]">
      <button type="button" aria-label="Report" className="flex h-[32px] items-center justify-center border-l-[3px] border-[#f2c811] pr-[1px]">
        <svg width="13" height="13" viewBox="0 0 13 13" fill="none">
          <path d="M.7 0V12.300H13" stroke="#323130" strokeWidth="1.200" />
          <path d="M2.800 3H4.800V10.500H2.800ZM6.200 5H8.200V10.500H6.200ZM9.600 1H11.600V10.500H9.600Z" stroke="#323130" />
        </svg>
      </button>
      <button type="button" aria-label="Data" className="flex h-[35px] items-center justify-center pl-[2px]">
        <svg width="14" height="13" viewBox="0 0 14 13" fill="none">
          <path d="M.5 .5H13.500V12.500H.5ZM.5 3.200H13.500M.5 6.300H13.500M.5 9.400H13.500M4.800 3V12.500M9.200 3V12.500" stroke="#7a7876" />
        </svg>
      </button>
      <button type="button" aria-label="Model" className="flex h-[35px] items-center justify-center pl-[2px]">
        <svg width="16" height="16" viewBox="0 0 16 16" fill="none">
          <path d="M.5 5H6.500V11.500H.5ZM.5 7H6.500M9.500 .5H15.500V6.500H9.500ZM9.500 2.500H15.500M9.500 9H15.500V15.500H9.500ZM9.500 11H15.500M9.500 3H4V5M4 11.500V13.500H9.500" stroke="#7a7876" />
        </svg>
      </button>
    </nav>
  );
}

function PageTabs() {
  return (
    <div className="flex h-[30px] shrink-0 bg-[#f3f2f1] text-[10px] text-[#484644]">
      <div className="flex w-[35px] items-center justify-between border-r border-[#c8c6c4] pr-[6px] pl-[5px]">
        <button type="button" aria-label="Previous page">
          <svg width="4" height="8" viewBox="0 0 4 8"><path d="M4 0V8L0 4Z" fill="#c8c6c4" /></svg>
        </button>
        <button type="button" aria-label="Next page">
          <svg width="4" height="8" viewBox="0 0 4 8"><path d="M0 0V8L4 4Z" fill="#c8c6c4" /></svg>
        </button>
      </div>
      <button type="button" className="w-[104px] border-r border-[#d2d0ce]">Key Influencers</button>
      <button type="button" className="w-[133px]">Key Influencers (Cont)</button>
      <button type="button" className="w-[129px] border-b-[3px] border-l border-b-[#f2c811] border-l-[#d2d0ce] bg-white pt-[3px] font-semibold text-[#323130]">
        Decomposition Tree
      </button>
      <button type="button" aria-label="New page" className="mt-[1px] mb-[1px] flex w-[34px] items-center justify-center bg-[#f2c811]">
        <svg width="10" height="10" viewBox="0 0 10 10"><path d="M5 0V10M0 5H10" stroke="#7a7460" strokeWidth="2.600" /></svg>
      </button>
    </div>
  );
}

export default function App() {
  return (
    <div className="flex h-screen min-h-[755px] flex-col bg-[#f3f2f1] font-['Open_Sans',sans-serif] text-[#323130]">
      <div className="h-[3px] shrink-0 bg-[#eaeaea]" />
      <div className="flex min-h-0 flex-1">
        <NavRail />
        <div className="flex min-w-0 flex-1 flex-col">
          <main className="flex min-h-0 flex-1 bg-white px-[17px] pb-[8px]">
            <div className="relative flex min-w-0 flex-1 border-2 border-t-0 border-dotted border-[#484644]">
              <Guides />
              <Tree />
              <MapVisual />
            </div>
          </main>
          <PageTabs />
        </div>
        <FiltersStrip />
        <Visualizations />
        <Fields />
      </div>
      <footer className="h-[18px] shrink-0 border-t border-[#e1dfdd] pl-[4px] text-[10px] leading-[20px] text-[#605e5c]">
        Page 3 of 3
      </footer>
    </div>
  );
}
